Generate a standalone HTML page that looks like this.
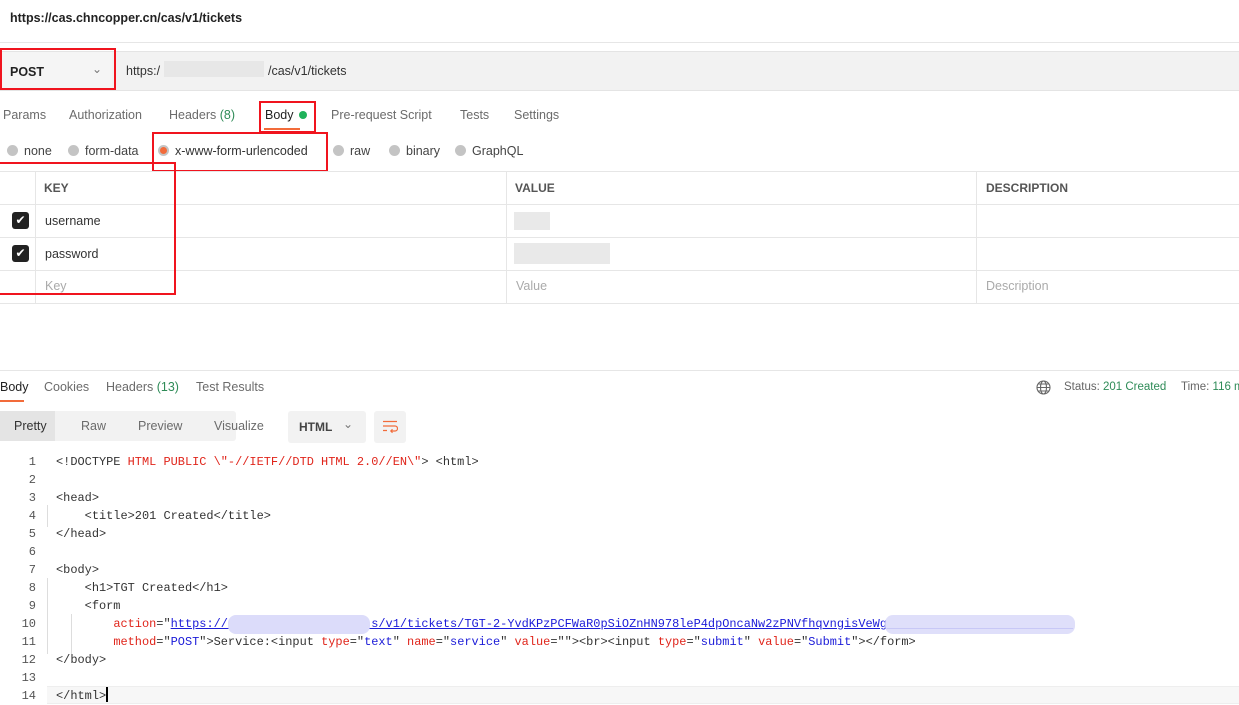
<!DOCTYPE html>
<html><head><style>
*{margin:0;padding:0;box-sizing:border-box}
body{width:1239px;height:705px;overflow:hidden;background:#fff;font-family:"Liberation Sans",sans-serif;font-size:12.5px;color:#333;position:relative}
.a{position:absolute;white-space:nowrap}
.red{position:absolute;border:2px solid #f0141e}
.g{color:#6b6b6b}
.rd{display:inline-block;width:11px;height:11px;border-radius:50%;background:#c4c4c4;vertical-align:-1px;margin-right:6px}
.code{position:absolute;left:0;font-family:"Liberation Mono",monospace;font-size:11.95px;line-height:18px;white-space:pre}
.ln{position:absolute;width:36px;text-align:right;color:#555;font-family:"Liberation Mono",monospace;font-size:12px}
.k{color:#e0251b}.s{color:#1b1bd8}
.hl{position:absolute;height:1px;background:#e6e6e6}
.vl{position:absolute;width:1px;background:#e6e6e6}
.blur{position:absolute;background:#e4e4e4;opacity:.8}
</style></head><body>
<div class="a" style="left:10px;top:11px;font-weight:bold;font-size:12.5px;color:#222">https://cas.chncopper.cn/cas/v1/tickets</div>
<div class="hl" style="left:0;top:42px;width:1239px"></div>
<div style="position:absolute;left:0;top:51px;width:1239px;height:40px;background:#f2f2f2;border-top:1px solid #e4e4e4;border-bottom:1px solid #e4e4e4"></div>
<div style="position:absolute;left:2px;top:52px;width:110px;height:38px;background:#f5f5f5"></div>
<div class="a" style="left:10px;top:65px;font-weight:bold;font-size:12.5px;color:#222">POST</div>
<div class="a" style="left:92px;top:62px;color:#777;font-size:12px">&#8964;</div>
<div class="a" style="left:126px;top:64px;color:#333">https:/</div>
<div class="blur" style="left:164px;top:61px;width:100px;height:16px"></div>
<div class="a" style="left:268px;top:64px;color:#333">/cas/v1/tickets</div>
<div class="red" style="left:0;top:48px;width:116px;height:42px"></div>
<div class="a g" style="left:3px;top:108px">Params</div>
<div class="a g" style="left:69px;top:108px">Authorization</div>
<div class="a g" style="left:169px;top:108px">Headers <span style="color:#2e8b57">(8)</span></div>
<div class="a" style="left:265px;top:108px;color:#222">Body <span style="display:inline-block;width:8px;height:8px;border-radius:50%;background:#1fb25a;margin-left:2px"></span></div>
<div style="position:absolute;left:264px;top:128px;width:36px;height:2px;background:#f26b3a"></div>
<div class="red" style="left:259px;top:101px;width:57px;height:32px"></div>
<div class="a g" style="left:331px;top:108px">Pre-request Script</div>
<div class="a g" style="left:460px;top:108px">Tests</div>
<div class="a g" style="left:514px;top:108px">Settings</div>
<div class="a" style="left:7px;top:144px;color:#444"><span class="rd"></span>none</div>
<div class="a" style="left:68px;top:144px;color:#444"><span class="rd"></span>form-data</div>
<div class="a" style="left:158px;top:144px;color:#333"><span class="rd" style="background:#f26b3a;border:2px solid #c4c4c4"></span>x-www-form-urlencoded</div>
<div class="a" style="left:333px;top:144px;color:#444"><span class="rd"></span>raw</div>
<div class="a" style="left:389px;top:144px;color:#444"><span class="rd"></span>binary</div>
<div class="a" style="left:455px;top:144px;color:#444"><span class="rd"></span>GraphQL</div>
<div class="red" style="left:152px;top:132px;width:176px;height:40px"></div>
<div class="hl" style="left:0;top:171px;width:1239px"></div>
<div class="hl" style="left:0;top:204px;width:1239px"></div>
<div class="hl" style="left:0;top:237px;width:1239px"></div>
<div class="hl" style="left:0;top:270px;width:1239px"></div>
<div class="hl" style="left:0;top:303px;width:1239px"></div>
<div class="vl" style="left:35px;top:171px;height:133px"></div>
<div class="vl" style="left:506px;top:171px;height:133px"></div>
<div class="vl" style="left:976px;top:171px;height:133px"></div>
<div class="a" style="left:44px;top:181px;font-weight:bold;font-size:12px;color:#555">KEY</div>
<div class="a" style="left:515px;top:181px;font-weight:bold;font-size:12px;color:#555">VALUE</div>
<div class="a" style="left:986px;top:181px;font-weight:bold;font-size:12px;color:#555">DESCRIPTION</div>
<div style="position:absolute;left:12px;top:212px;width:17px;height:17px;background:#222;border-radius:3px;color:#fff;font-size:12px;text-align:center;line-height:17px">&#10004;</div>
<div style="position:absolute;left:12px;top:245px;width:17px;height:17px;background:#222;border-radius:3px;color:#fff;font-size:12px;text-align:center;line-height:17px">&#10004;</div>
<div class="a" style="left:45px;top:214px;color:#333">username</div>
<div class="a" style="left:45px;top:247px;color:#333">password</div>
<div class="a" style="left:45px;top:279px;color:#aaa">Key</div>
<div class="a" style="left:516px;top:279px;color:#aaa">Value</div>
<div class="a" style="left:986px;top:279px;color:#aaa">Description</div>
<div class="blur" style="left:514px;top:212px;width:36px;height:18px"></div>
<div class="blur" style="left:514px;top:243px;width:96px;height:21px"></div>
<div class="red" style="left:-4px;top:162px;width:180px;height:133px"></div>
<div class="hl" style="left:0;top:370px;width:1239px"></div>
<div class="a" style="left:0;top:380px;color:#222">Body</div>
<div style="position:absolute;left:0;top:400px;width:24px;height:2px;background:#f26b3a"></div>
<div class="a g" style="left:44px;top:380px">Cookies</div>
<div class="a g" style="left:106px;top:380px">Headers <span style="color:#2e8b57">(13)</span></div>
<div class="a g" style="left:196px;top:380px">Test Results</div>
<svg class="a" style="left:1036px;top:380px" width="15" height="15" viewBox="0 0 15 15" fill="none" stroke="#666" stroke-width="1.1"><circle cx="7.5" cy="7.5" r="6.5"/><ellipse cx="7.5" cy="7.5" rx="3" ry="6.5"/><path d="M1 7.5h13M2 4h11M2 11h11"/></svg>
<div class="a" style="left:1064px;top:381px;font-size:11.5px;color:#666">Status: <span style="color:#2e8b57">201 Created</span></div>
<div class="a" style="left:1181px;top:381px;font-size:11.5px;color:#666">Time: <span style="color:#2e8b57">116 m</span></div>
<div style="position:absolute;left:0;top:411px;width:236px;height:30px;background:#f2f2f2;border-radius:3px"></div>
<div style="position:absolute;left:0;top:411px;width:55px;height:30px;background:#e4e4e4"></div>
<div class="a" style="left:14px;top:419px;color:#333">Pretty</div>
<div class="a g" style="left:81px;top:419px">Raw</div>
<div class="a g" style="left:138px;top:419px">Preview</div>
<div class="a g" style="left:214px;top:419px">Visualize</div>
<div style="position:absolute;left:288px;top:411px;width:78px;height:32px;background:#f2f2f2;border-radius:3px"></div>
<div class="a" style="left:299px;top:420px;font-weight:bold;font-size:12px;color:#444">HTML</div>
<div class="a" style="left:343px;top:417px;color:#777;font-size:12px">&#8964;</div>
<div style="position:absolute;left:374px;top:411px;width:32px;height:32px;background:#f2f2f2;border-radius:3px"></div>
<svg class="a" style="left:382px;top:420px" width="16" height="14" viewBox="0 0 16 14" fill="none" stroke="#f26b3a" stroke-width="1.2"><path d="M1 1.5h14M1 6h12a2.5 2.5 0 0 1 0 5H9M10.5 9.3L8.8 11l1.7 1.7M1 10.5h4"/></svg>
<div class="ln" style="left:0;top:453px;line-height:18px">1<br>2<br>3<br>4<br>5<br>6<br>7<br>8<br>9<br>10<br>11<br>12<br>13<br>14</div>
<div class="vl" style="left:47px;top:505px;height:22px;background:#ddd"></div>
<div class="vl" style="left:47px;top:578px;height:76px;background:#ddd"></div>
<div class="vl" style="left:71px;top:614px;height:40px;background:#ddd"></div>
<div style="position:absolute;left:47px;top:686px;width:1192px;height:18px;background:#f7f7f7;border-top:1px solid #eee;border-bottom:1px solid #eee"></div>
<div class="code" style="left:56px;top:453px;color:#333"><div>&lt;!DOCTYPE <span class="k">HTML PUBLIC \"-//IETF//DTD HTML 2.0//EN\"</span>&gt; &lt;html&gt;</div><div> </div><div>&lt;head&gt;</div><div>    &lt;title&gt;201 Created&lt;/title&gt;</div><div>&lt;/head&gt;</div><div> </div><div>&lt;body&gt;</div><div>    &lt;h1&gt;TGT Created&lt;/h1&gt;</div><div>    &lt;form</div><div>        <span class="k">action</span>="<span class="s" style="text-decoration:underline">https://                    s/v1/tickets/TGT-2-YvdKPzPCFWaR0pSiOZnHN978leP4dpOncaNw2zPNVfhqvngisVeWg                          </span></div><div>        <span class="k">method</span>="<span class="s">POST</span>"&gt;Service:&lt;input <span class="k">type</span>="<span class="s">text</span>" <span class="k">name</span>="<span class="s">service</span>" <span class="k">value</span>=""&gt;&lt;br&gt;&lt;input <span class="k">type</span>="<span class="s">submit</span>" <span class="k">value</span>="<span class="s">Submit</span>"&gt;&lt;/form&gt;</div><div>&lt;/body&gt;</div><div> </div><div>&lt;/html&gt;<span style="display:inline-block;width:2px;height:15px;background:#000;vertical-align:-3px"></span></div></div>
<div style="position:absolute;left:228px;top:615px;width:142px;height:19px;background:#dcdcfa;border-radius:8px"></div>
<div style="position:absolute;left:885px;top:615px;width:190px;height:19px;background:#dcdcfa;border-radius:8px;opacity:.9"></div>
</body></html>
